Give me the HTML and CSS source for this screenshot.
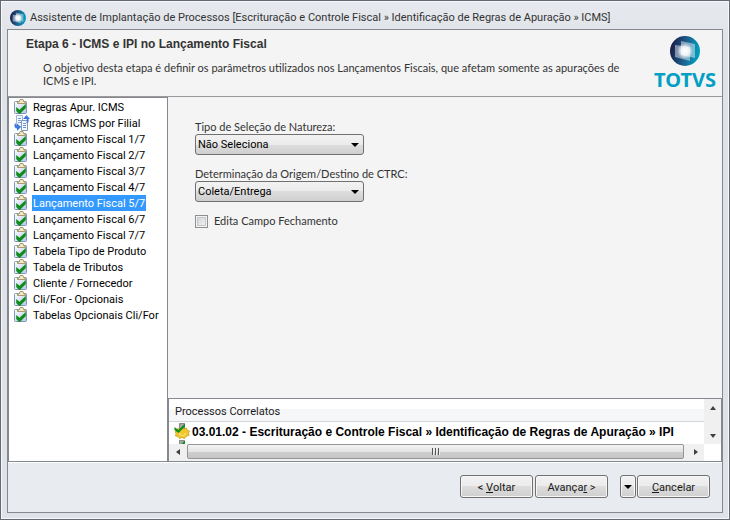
FILE: index.html
```html
<!DOCTYPE html>
<html lang="pt-BR">
<head>
    <meta charset="UTF-8">
    <meta name="viewport" content="width=device-width, initial-scale=1.0">
    <title>Assistente de Implantação de Processos</title>
    <link rel="stylesheet" href="styles.css">
</head>
<body>

<!-- Shared icons -->
<svg class="defs" width="0" height="0" aria-hidden="true">
    <defs>
        <linearGradient id="globeFill" x1="0" y1="0.4" x2="1" y2="0.6">
            <stop offset="0" stop-color="#1b1a45"/>
            <stop offset="0.5" stop-color="#1d5f8e"/>
            <stop offset="1" stop-color="#00a5c4"/>
        </linearGradient>
        <radialGradient id="globeLight">
            <stop offset="0" stop-color="#fff"/>
            <stop offset="0.5" stop-color="#fff" stop-opacity="0.8"/>
            <stop offset="1" stop-color="#fff" stop-opacity="0"/>
        </radialGradient>
        <linearGradient id="boardFill" x1="0" y1="0" x2="1" y2="1">
            <stop offset="0" stop-color="#fff"/>
            <stop offset="1" stop-color="#b4c8ea"/>
        </linearGradient>
    </defs>
    <symbol id="globe" viewBox="0 0 30 30">
        <circle cx="15" cy="15" r="15" fill="url(#globeFill)"/>
        <path d="M11 5l14 3v14l-14-3z" fill="#fff" opacity="0.45"/>
        <path d="M5 9l15 2v14L5 21z" fill="#fff" opacity="0.45"/>
        <circle cx="15" cy="15" r="8" fill="url(#globeLight)"/>
    </symbol>
    <symbol id="check" viewBox="0 0 16 16">
        <rect x="0.5" y="2.5" width="12" height="12" rx="1" fill="url(#boardFill)" stroke="#8296b8"/>
        <path d="M3.500 4.500V3H5L6 .5h3l1 2.500h1.500v1.500z" fill="#f0e8c4" stroke="#a79b70"/>
        <path d="M2.500 8.500L5.500 11 11.500 5.500V9l-6 6-3-3z" fill="#0c8f17" stroke="#0b7a14" stroke-width="0.5"/>
    </symbol>
    <symbol id="sync" viewBox="0 0 16 16">
        <path d="M2.500.5h6v11h-6z" fill="#f4f8ff" stroke="#9fb3d6"/>
        <path d="M4 3.500h3M4 5.500h3M4 7.500h3" stroke="#7d9cd2"/>
        <path d="M7.500 5.500h6v10h-6z" fill="#f4f8ff" stroke="#7f96c2"/>
        <path d="M9 8.500h3M9 10.500h3M9 12.500h3" stroke="#6f90ca"/>
        <path d="M9 4l3.500-4L16 4h-1.500c.5 2.500 0 4-2.500 4 1-1 1-2.500.5-4z" fill="#3f78dc"/>
        <path d="M2 8C-.5 9 0 13 3 13.500V16l4-4-4-3.500v2C2 10.500 1.500 9.500 2 8z" fill="#3f78dc"/>
    </symbol>
    <symbol id="gear" viewBox="0 0 16 16">
        <path d="M5.500.5h5v6h-5z" fill="#a5a5a5" stroke="#888"/>
        <path d="M8 5l2 1 2.500-1 .5 2 2.500 1-1 2 .5 2.500-2.500.5L10.500 15.500 8 14.500l-2.500 1-1.500-2-2.500-.5.5-2.500-1-2 2.500-1L4 5l2 1z" fill="#f2c72e" stroke="#c9960f" stroke-width="0.7"/>
        <path d="M5.500 10a3 2.500 0 1 0 6 0" fill="none" stroke="#fbe88d"/>
        <path d="M.5 4l4 3L11 .5v3L4.500 10 .5 7z" fill="#0c8f17"/>
    </symbol>
</svg>

<div class="window">
    <header class="titlebar">
        <svg class="app-icon"><use href="#globe"/></svg>
        <span>Assistente de Implantação de Processos [Escrituração e Controle Fiscal » Identificação de Regras de Apuração » ICMS]</span>
    </header>

    <main class="panel">
        <section class="step">
            <div class="step-text">
                <h1>Etapa 6 - ICMS e IPI no Lançamento Fiscal</h1>
                <p>O objetivo desta etapa é definir os parâmetros utilizados nos Lançamentos Fiscais, que afetam somente as apurações de ICMS e IPI.</p>
            </div>
            <div class="logo">
                <svg class="logo-globe"><use href="#globe"/></svg>
                <span class="logo-name">TOTVS</span>
            </div>
        </section>

        <div class="body">
            <ul class="tree">
                <li><svg><use href="#check"/></svg><span>Regras Apur. ICMS</span></li>
                <li><svg><use href="#sync"/></svg><span>Regras ICMS por Filial</span></li>
                <li><svg><use href="#check"/></svg><span>Lançamento Fiscal 1/7</span></li>
                <li><svg><use href="#check"/></svg><span>Lançamento Fiscal 2/7</span></li>
                <li><svg><use href="#check"/></svg><span>Lançamento Fiscal 3/7</span></li>
                <li><svg><use href="#check"/></svg><span>Lançamento Fiscal 4/7</span></li>
                <li class="selected"><svg><use href="#check"/></svg><span>Lançamento Fiscal 5/7</span></li>
                <li><svg><use href="#check"/></svg><span>Lançamento Fiscal 6/7</span></li>
                <li><svg><use href="#check"/></svg><span>Lançamento Fiscal 7/7</span></li>
                <li><svg><use href="#check"/></svg><span>Tabela Tipo de Produto</span></li>
                <li><svg><use href="#check"/></svg><span>Tabela de Tributos</span></li>
                <li><svg><use href="#check"/></svg><span>Cliente / Fornecedor</span></li>
                <li><svg><use href="#check"/></svg><span>Cli/For - Opcionais</span></li>
                <li><svg><use href="#check"/></svg><span>Tabelas Opcionais Cli/For</span></li>
            </ul>

            <div class="content">
                <form class="fields">
                    <div class="field">
                        <label for="natureza">Tipo de Seleção de Natureza:</label>
                        <select id="natureza">
                            <option>Não Seleciona</option>
                        </select>
                    </div>
                    <div class="field">
                        <label for="ctrc">Determinação da Origem/Destino de CTRC:</label>
                        <select id="ctrc">
                            <option>Coleta/Entrega</option>
                        </select>
                    </div>
                    <div class="check-field">
                        <input type="checkbox" id="fechamento">
                        <label for="fechamento">Edita Campo Fechamento</label>
                    </div>
                </form>

                <section class="related">
                    <div class="related-list">
                        <h2>Processos Correlatos</h2>
                        <div class="related-rows">
                            <div class="related-row"><svg><use href="#gear"/></svg><span>03.01.02 - Escrituração e Controle Fiscal » Identificação de Regras de Apuração » IPI</span></div>
                            <div class="related-row"><svg><use href="#gear"/></svg></div>
                        </div>
                    </div>
                    <div class="vscroll">
                        <button type="button" aria-label="Para cima"><i class="arrow up"></i></button>
                        <button type="button" aria-label="Para baixo"><i class="arrow down"></i></button>
                    </div>
                    <div class="hscroll">
                        <button type="button" aria-label="Esquerda"><i class="arrow left"></i></button>
                        <div class="thumb"><i></i><i></i><i></i></div>
                        <button type="button" aria-label="Direita"><i class="arrow right"></i></button>
                    </div>
                </section>
            </div>
        </div>

        <footer class="actions">
            <button type="button" class="btn">&lt; <u>V</u>oltar</button>
            <button type="button" class="btn">Avança<u>r</u> &gt;</button>
            <button type="button" class="btn btn-menu" aria-label="Mais opções"><i class="arrow down"></i></button>
            <button type="button" class="btn btn-cancel"><u>C</u>ancelar</button>
        </footer>
    </main>
</div>

</body>
</html>
```
FILE: styles.css
```css
/* Base Styles */
* {
    box-sizing: border-box;
}
body {
    margin: 0;
    font-family: Roboto, sans-serif;
    font-size: 11px;
    line-height: 16px;
    color: #000;
}
button, select, input {
    font: inherit;
    color: inherit;
    margin: 0;
}
svg {
    display: block;
    flex: none;
}
.defs {
    position: absolute;
}

/* Window */
.window {
    display: flex;
    flex-direction: column;
    height: 100vh;
    padding: 2px 6px 6px;
    border: 1px solid #646974;
    background: linear-gradient(#e7e9ee, #dfe3e8 40px);
    box-shadow: inset 0 0 0 1px #f7f8fa;
}
.titlebar {
    display: flex;
    align-items: center;
    gap: 4px;
    height: 26px;
    padding: 4px 3px 0;
    color: #333;
    white-space: nowrap;
}
.app-icon {
    width: 16px;
    height: 16px;
}
.panel {
    flex: 1;
    display: flex;
    flex-direction: column;
    min-height: 0;
    border: 1px solid #85898f;
    background: #f4f4f4;
}

/* Step header */
.step {
    display: flex;
    justify-content: space-between;
    height: 67px;
    padding: 6px 6px 0 18px;
    border-bottom: 1px solid #9a9a9a;
    color: #333;
}
.step h1 {
    margin: 0;
    font-family: "Liberation Sans", sans-serif;
    font-size: 12px;
    line-height: 16px;
}
.step p {
    margin: 9px 0 0 17px;
    font-family: Lato, sans-serif;
    line-height: 13px;
    max-width: 590px;
}
.logo {
    display: flex;
    flex-direction: column;
    align-items: center;
    gap: 2px;
}
.logo-globe {
    width: 30px;
    height: 30px;
}
.logo-name {
    font-family: "Noto Sans", sans-serif;
    font-size: 20px;
    font-weight: 700;
    line-height: 24px;
    color: #00a0c4;
}

/* Body */
.body {
    flex: 1;
    display: flex;
    min-height: 0;
}
.tree {
    width: 160px;
    margin: 0;
    padding: 1px 0 0 5px;
    list-style: none;
    background: #fff;
    border: 1px solid #85898f;
    border-width: 1px 1px 0 1px;
}
.tree li {
    display: flex;
    gap: 2px;
    white-space: nowrap;
}
.tree svg {
    width: 16px;
    height: 16px;
}
.tree span {
    padding: 2px 1px 0;
    line-height: 14px;
}
.selected span {
    background: #3399ff;
    color: #fff;
}
.content {
    flex: 1;
    display: flex;
    flex-direction: column;
    min-width: 0;
}
.fields {
    flex: 1;
    padding: 23px 27px 0;
    line-height: 14px;
    color: #333;
}
.fields label {
    font-family: Lato, sans-serif;
}
.field {
    margin-bottom: 12px;
}
.field label {
    display: block;
}
select {
    appearance: none;
    display: block;
    width: 169px;
    height: 21px;
    padding: 0 2px;
    border: 1px solid #707070;
    border-radius: 3px;
    color: #000;
    background:
        url("data:image/svg+xml,%3Csvg xmlns='http://www.w3.org/2000/svg' width='8' height='4'%3E%3Cpath d='M0 0h8L4 4z'/%3E%3C/svg%3E") no-repeat right 4px center,
        linear-gradient(#f2f2f2, #ebebeb 50%, #dddddd 50%, #cfcfcf);
}
.check-field {
    display: flex;
    align-items: center;
    gap: 6px;
}
.check-field input {
    appearance: none;
    width: 13px;
    height: 13px;
    border: 1px solid #8e8f8f;
    background: linear-gradient(135deg, #cbcfd5, #f6f6f6);
    box-shadow: inset 0 0 0 1px #f4f4f4, inset 0 0 0 2px #c4c8cd;
}

/* Related processes */
.related {
    display: grid;
    grid-template-columns: 1fr 17px;
    border: 1px solid #85898f;
    border-bottom: 0;
    background: #fff;
}
.related-list {
    min-width: 0;
}
.related h2 {
    margin: 0;
    padding: 5px 6px 1px;
    font-size: 11px;
    font-weight: normal;
    color: #1a1a1a;
    background: linear-gradient(#fff 45%, #f6f7f9 45%);
    border-bottom: 1px solid #d5d5d5;
}
.related-rows {
    height: 22px;
    padding-top: 1px;
    overflow: hidden;
}
.related-row {
    display: flex;
    gap: 2px;
    height: 17px;
    padding-left: 5px;
    font-family: "Liberation Sans", sans-serif;
    font-size: 12px;
    font-weight: bold;
    line-height: 18px;
    white-space: nowrap;
}
.related-row svg {
    width: 16px;
    height: 16px;
}
.vscroll {
    display: flex;
    flex-direction: column;
    justify-content: space-between;
    background: #f0f0f0;
}
.hscroll {
    display: flex;
    height: 17px;
    padding-bottom: 2px;
    background: #f0f0f0;
}
.vscroll button, .hscroll button {
    display: grid;
    place-items: center;
    width: 17px;
    height: 17px;
    padding: 0;
    border: 0;
    background: none;
}
.hscroll button {
    height: 15px;
}
.thumb {
    flex: 1;
    display: flex;
    justify-content: center;
    align-items: center;
    gap: 1px;
    margin: 0 3px 0 1px;
    border: 1px solid #959595;
    border-radius: 2px;
    background: linear-gradient(#f4f4f4, #e4e4e4 50%, #cfcfcf 50%, #c6c6c6);
}
.thumb i {
    width: 2px;
    height: 7px;
    background: linear-gradient(90deg, #555 50%, #eee 50%);
}

/* Arrows */
.arrow {
    border: 4px solid transparent;
}
.arrow.up {
    border-width: 0 3px 4px;
    border-bottom-color: #404040;
}
.arrow.down {
    border-width: 4px 3px 0;
    border-top-color: #404040;
}
.arrow.left {
    border-width: 3px 4px 3px 0;
    border-right-color: #404040;
}
.arrow.right {
    border-width: 3px 0 3px 4px;
    border-left-color: #404040;
}

/* Buttons */
.actions {
    display: flex;
    height: 51px;
    padding: 13px 12px 0;
    justify-content: flex-end;
    gap: 2px;
    border-top: 1px solid #85898f;
    background: #e8ebef;
    box-shadow: inset 0 1px 0 #fff;
}
.btn {
    display: flex;
    justify-content: center;
    align-items: center;
    white-space: pre;
    width: 73px;
    height: 23px;
    padding: 2px 0 0;
    border: 1px solid #707070;
    border-radius: 3px;
    color: #1a1a1a;
    background: linear-gradient(#f2f2f2, #ebebeb 50%, #dddddd 50%, #cfcfcf);
    box-shadow: inset 0 0 0 1px #f7f7f7;
}
.btn-menu {
    width: 16px;
    margin-left: 10px;
    padding: 0;
}
.btn-menu .arrow {
    border-width: 4px 4px 0;
    border-top-color: #000;
}
.btn-cancel {
    margin-left: -1px;
}
```
